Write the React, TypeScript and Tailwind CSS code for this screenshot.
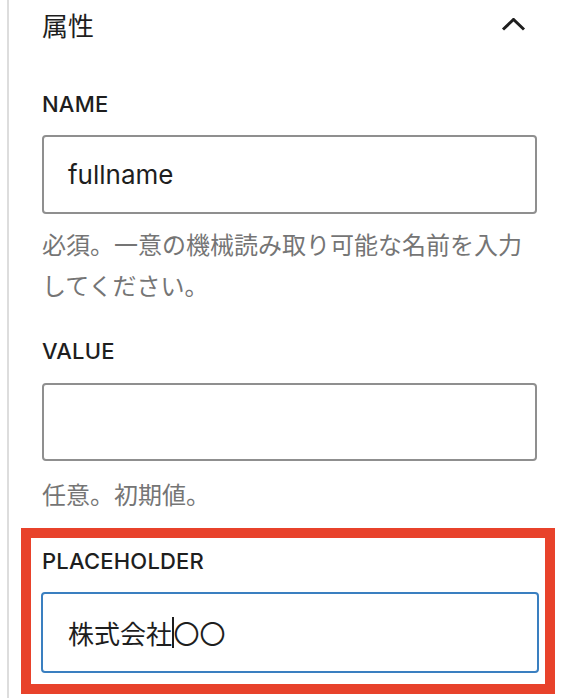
import React from "react";

const latin = { fontFamily: 'Inter, "Noto Sans CJK JP", sans-serif' };
const cjk = { fontFamily: '"Noto Sans CJK JP", Inter, sans-serif' };

function Label({ children }: { children: React.ReactNode }) {
  return (
    <div className="text-[22px] leading-[22px] font-medium uppercase text-[#1e1e1e] tracking-[0.2px]">
      {children}
    </div>
  );
}

export default function App() {
  return (
    <div className="w-[566px] h-[698px] bg-white overflow-hidden flex" style={latin}>
      <div className="ml-[7px] h-full border-l-2 border-[#dddddd]" />
      <div className="pl-[33px] w-[528px] flex flex-col">
        <div className="h-[50px] flex items-center justify-between">
          <div className="text-[26px] leading-[26px] text-[#1e1e1e]" style={cjk}>
            属性
          </div>
          <svg
            width="25"
            height="13"
            viewBox="0 0 25 13"
            className="mr-[11px] mb-[2px]"
            fill="none"
          >
            <path d="M2 11.5 L12.5 1.5 L23 11.5" stroke="#1e1e1e" strokeWidth="3" />
          </svg>
        </div>

        <div className="mt-[43px]">
          <Label>Name</Label>
        </div>
        <div className="mt-[20px] h-[79px] border-2 border-[#8f8f8f] rounded-[4px] pl-[24px] flex items-center text-[26px] text-[#1e1e1e]">
          fullname
        </div>
        <div className="mt-[9px] text-[24px] leading-[41px] text-[#757575]" style={cjk}>
          必須。一意の機械読み取り可能な名前を入力
          <br />
          してください。
        </div>

        <div className="mt-[35px]">
          <Label>Value</Label>
        </div>
        <div className="mt-[21px] h-[78px] border-2 border-[#8f8f8f] rounded-[4px]" />
        <div className="mt-[12px] text-[24px] leading-[41px] text-[#757575]" style={cjk}>
          任意。初期値。
        </div>

        <div className="mt-[14px] -ml-[21px] w-[534px] border-[10px] border-[#e8422b] pl-[10px] pt-[12px] pb-[11px]">
          <div className="pl-[1px]">
            <Label>Placeholder</Label>
          </div>
          <div
            className="mt-[20px] w-[498px] h-[81px] border-2 border-[#3a7fc0] rounded-[4px] pl-[25px] flex items-center text-[26px] text-[#1e1e1e]"
            style={cjk}
          >
            <span>株式会社</span>
            <span className="inline-block w-[1.5px] h-[31px] bg-[#1e1e1e]" />
            <span>〇〇</span>
          </div>
        </div>
      </div>
    </div>
  );
}
